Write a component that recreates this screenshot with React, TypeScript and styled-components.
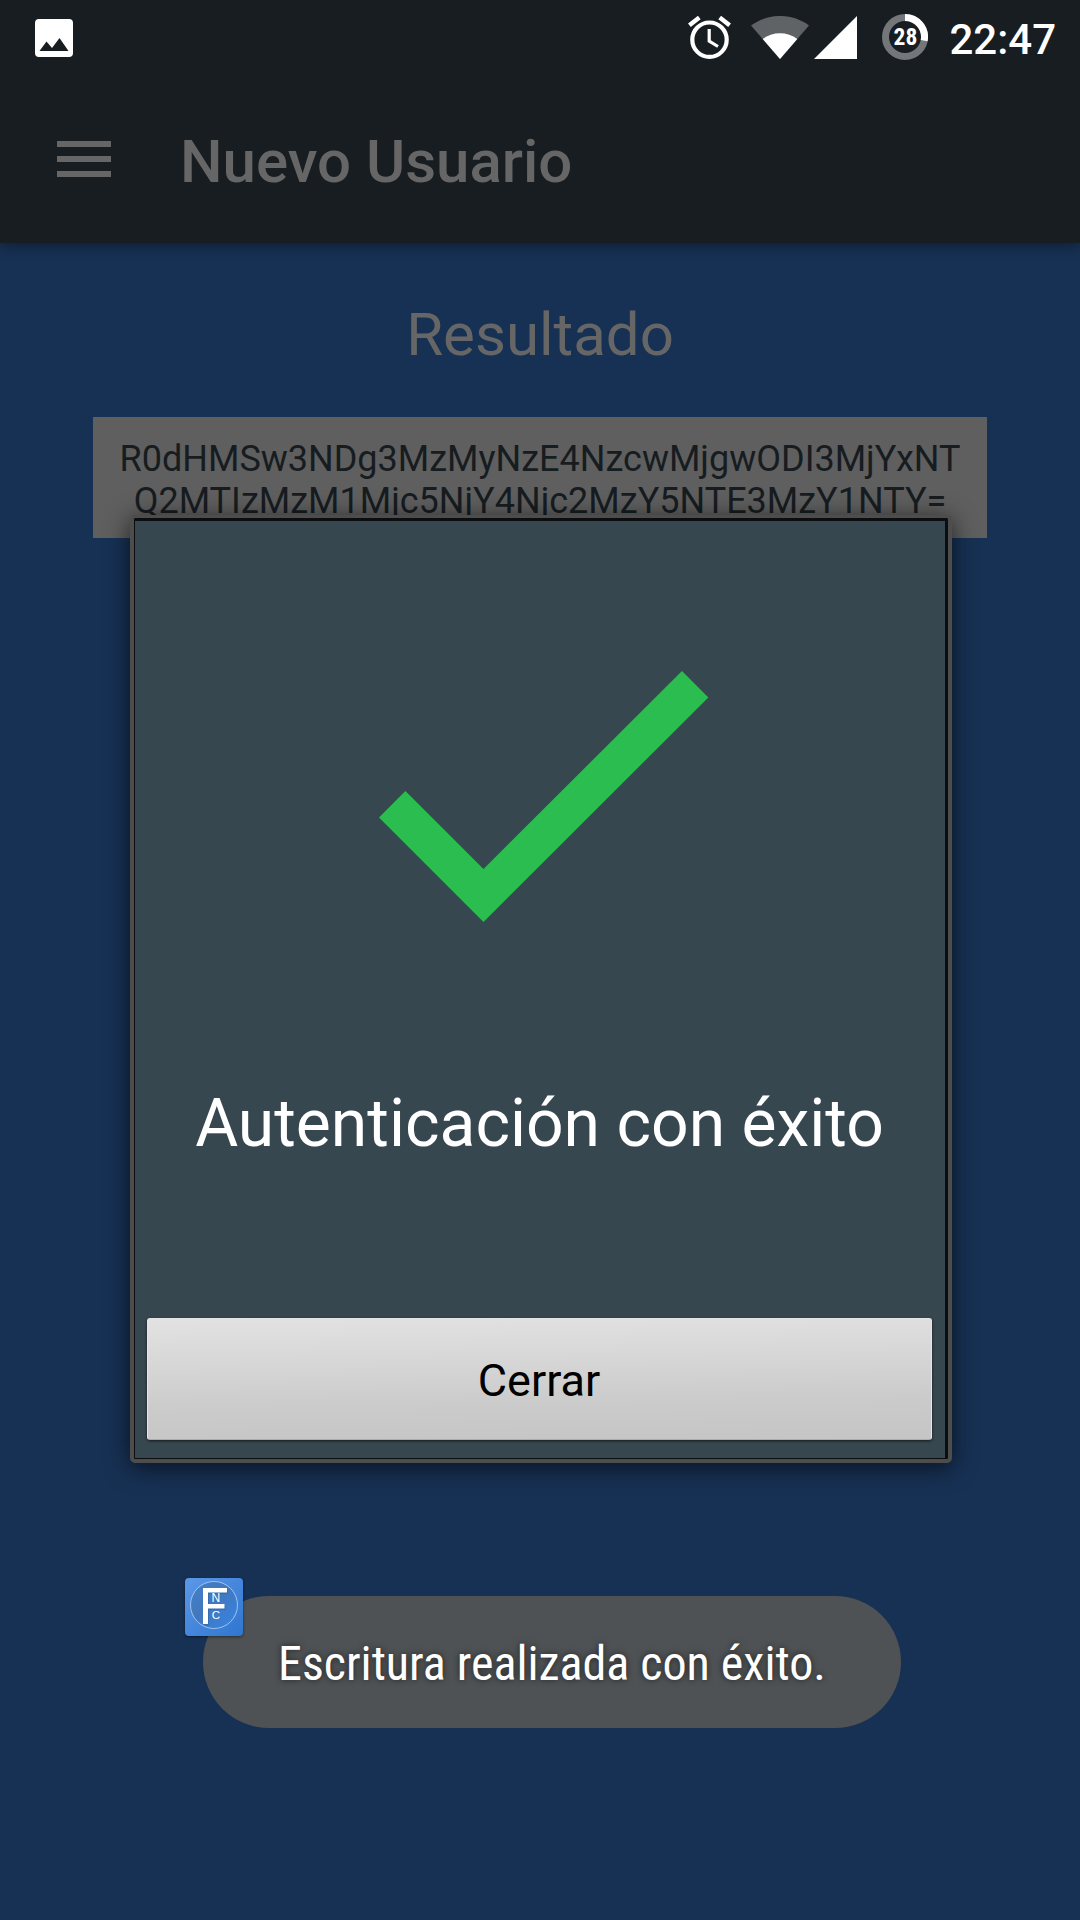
import React from "react";
import styled, { createGlobalStyle } from "styled-components";

const GlobalStyle = createGlobalStyle`
  *, *::before, *::after { box-sizing: border-box; }
  html, body { margin: 0; padding: 0; background: #173154; }
  body { font-family: Roboto, "Liberation Sans", sans-serif; }
`;

const Screen = styled.div`
  position: relative;
  display: flex;
  flex-direction: column;
  width: 1080px;
  height: 1920px;
  overflow: hidden;
  background: #173154;
`;

const Header = styled.header`
  height: 243px;
  flex: none;
  background: #171d20;
  box-shadow: 0 4px 12px rgba(0, 0, 0, 0.35);
  z-index: 1;
`;

const StatusBar = styled.div`
  display: flex;
  align-items: center;
  height: 75px;
  padding: 0 24px 0 35px;
  color: #fff;
`;

const StatusIcon = styled.svg<{ $gap?: number }>`
  flex: none;
  display: block;
  margin-right: ${(p) => p.$gap ?? 0}px;
`;

const Spacer = styled.div`
  flex: 1;
`;

const Battery = styled.div`
  position: relative;
  width: 46px;
  height: 46px;
  flex: none;
  margin-right: 21px;
  margin-top: -1px;
`;

const BatteryLevel = styled.span`
  position: absolute;
  inset: 0;
  display: flex;
  align-items: center;
  justify-content: center;
  font-family: "Roboto Condensed", Roboto, sans-serif;
  font-stretch: 75%;
  font-size: 23.5px;
  font-weight: 700;
  line-height: 46px;
`;

const Clock = styled.span`
  font-size: 42px;
  font-weight: 500;
  line-height: 50px;
  padding-top: 5px;
  white-space: nowrap;
`;

const AppBar = styled.div`
  display: flex;
  align-items: center;
  height: 168px;
  padding-left: 57px;
`;

const MenuButton = styled.button`
  display: flex;
  flex-direction: column;
  gap: 9px;
  width: 54px;
  margin: 0 69px 0 0;
  padding: 0;
  border: 0;
  background: none;
`;

const MenuLine = styled.span`
  height: 6px;
  background: #666;
`;

const Title = styled.h1`
  margin: 0;
  padding-top: 5px;
  font-size: 60px;
  font-weight: 500;
  line-height: 60px;
  color: #666;
  white-space: nowrap;
`;

const Content = styled.main`
  display: flex;
  flex-direction: column;
  align-items: center;
  padding-top: 57px;
`;

const Heading = styled.h2`
  margin: 0 0 47px;
  font-size: 60px;
  font-weight: 400;
  line-height: 70px;
  color: #666;
`;

const ResultBox = styled.div`
  width: 894px;
  height: 121px;
  padding-top: 21px;
  background: #5f5f5f;
  color: #161c20;
  font-size: 36px;
  line-height: 42px;
  text-align: center;
  white-space: nowrap;
`;

const Dialog = styled.section`
  position: absolute;
  left: 130px;
  top: 515px;
  width: 822px;
  height: 948px;
  border: 4px solid #4d4d4d;
  border-top-width: 3px;
  border-radius: 5px;
  background: #0b0d0f;
  padding: 3px 3px 1px 1px;
  box-shadow: 0 4px 24px rgba(0, 0, 0, 0.65);
  z-index: 2;
`;

const DialogBody = styled.div`
  display: flex;
  flex-direction: column;
  align-items: center;
  height: 100%;
  padding: 150px 13px 18px 12px;
  background: #37474f;
`;

const CheckMark = styled.svg`
  display: block;
  flex: none;
  margin-left: 8px;
`;

const Message = styled.p`
  margin: 162px 0 0;
  font-size: 66px;
  line-height: 80px;
  color: #fff;
  white-space: nowrap;
`;

const CloseButton = styled.button`
  width: 100%;
  height: 122px;
  margin-top: auto;
  padding: 3px 1px 0 0;
  border: 1px solid #e6e6e6;
  border-bottom-color: #a9adae;
  border-radius: 3px;
  background: linear-gradient(179deg, #e2e2e2 0%, #d9d9d9 28%, #cbcbcb 68%, #c5c5c5 100%);
  box-shadow: 0 1px 3px rgba(0, 0, 0, 0.65);
  font: 400 45px/54px Roboto, "Liberation Sans", sans-serif;
  color: #000;
`;

const Toast = styled.div`
  position: absolute;
  left: 203px;
  top: 1596px;
  display: flex;
  align-items: center;
  justify-content: center;
  width: 698px;
  height: 132px;
  border-radius: 66px;
  background: #4f5254;
  z-index: 3;
`;

const ToastText = styled.span`
  font-family: "Roboto Condensed", Roboto, sans-serif;
  font-stretch: 75%;
  font-size: 48px;
  line-height: 56px;
  color: #fff;
  white-space: nowrap;
  text-shadow: 0 0 6px rgba(0, 0, 0, 0.6);
  padding-top: 3px;
`;

const ToastIcon = styled.div`
  position: absolute;
  left: -18px;
  top: -18px;
  width: 58px;
  height: 58px;
  border-radius: 4px;
  background: linear-gradient(135deg, #5b98e8, #2f75cf);
  box-shadow: 0 1px 3px rgba(0, 0, 0, 0.5);
`;

export default function App() {
  return (
    <>
      <GlobalStyle />
      <Screen>
        <Header>
          <StatusBar>
            <StatusIcon width="38" height="38" viewBox="0 0 38 38">
              <path
                fillRule="evenodd"
                fill="#fff"
                d="M4 0H34A4 4 0 0 1 38 4V34A4 4 0 0 1 34 38H4A4 4 0 0 1 0 34V4A4 4 0 0 1 4 0ZM4.500 32H33.500L24.500 19L17 29L11.500 22.500Z"
              />
            </StatusIcon>
            <Spacer />
            <StatusIcon $gap={20} width="43" height="43" viewBox="0 0 43 43" fill="none" stroke="#fff">
              <circle cx="21.500" cy="23.700" r="17.200" strokeWidth="4.200" />
              <path d="M1.400 9.300L11.300 1.500M41.600 9.300L31.700 1.500" strokeWidth="4.400" />
              <path d="M21.200 13V25.200L30 30.500" strokeWidth="3.200" />
            </StatusIcon>
            <StatusIcon $gap={5} width="58" height="43" viewBox="0 0 58 43">
              <path d="M29 43L0 9.500C17 -3.200 41 -3.200 58 9.500Z" fill="#5f6365" />
              <path d="M29 43L11.700 23C21.500 15.200 36.500 15.200 46.300 23Z" fill="#fff" />
            </StatusIcon>
            <StatusIcon $gap={25} width="43" height="43" viewBox="0 0 43 43">
              <path d="M0 43H43V0Z" fill="#fff" />
            </StatusIcon>
            <Battery>
              <svg width="46" height="46" viewBox="0 0 46 46" fill="none" strokeWidth="7">
                <circle cx="23" cy="23" r="19.500" stroke="#74777a" />
                <path d="M23 3.500A19.500 19.500 0 0 1 42.150 26.700" stroke="#fff" />
              </svg>
              <BatteryLevel>28</BatteryLevel>
            </Battery>
            <Clock>22:47</Clock>
          </StatusBar>
          <AppBar>
            <MenuButton aria-label="Menú">
              <MenuLine />
              <MenuLine />
              <MenuLine />
            </MenuButton>
            <Title>Nuevo Usuario</Title>
          </AppBar>
        </Header>

        <Content>
          <Heading>Resultado</Heading>
          <ResultBox>
            R0dHMSw3NDg3MzMyNzE4NzcwMjgwODI3MjYxNT
            <br />
            Q2MTIzMzM1Mjc5NjY4Njc2MzY5NTE3MzY1NTY=
          </ResultBox>
        </Content>

        <Dialog>
          <DialogBody>
            <CheckMark width="330" height="251" viewBox="0 0 330 251">
              <path d="M303 0L329.400 26.400L104.500 251L0 146.400L26.400 120L104.500 198Z" fill="#2bbd4f" />
            </CheckMark>
            <Message>Autenticación con éxito</Message>
            <CloseButton>Cerrar</CloseButton>
          </DialogBody>
        </Dialog>

        <Toast>
          <ToastText>Escritura realizada con éxito.</ToastText>
          <ToastIcon>
            <svg width="58" height="58" viewBox="0 0 58 58">
              <defs>
                <linearGradient id="disc" x1="0" y1="0" x2="1" y2="1">
                  <stop offset="0" stopColor="#4680c8" />
                  <stop offset="0.45" stopColor="#4178bd" />
                  <stop offset="0.8" stopColor="#3a80d8" />
                </linearGradient>
              </defs>
              <circle cx="29" cy="27" r="23.500" fill="url(#disc)" stroke="#a9c8f2" strokeWidth="0.900" />
              <path d="M18 10H42V14.500H23V26H39.500V30.500H23V46H18Z" fill="#2c5f9f" fillOpacity="0.5" transform="translate(1 1.500)" />
              <path d="M18 10H42V14.500H23V26H39.500V30.500H23V46H18Z" fill="#fff" />
              <text x="30.800" y="24.300" fontSize="12" fill="#fff" textAnchor="middle" fontFamily="Liberation Sans, sans-serif">
                N
              </text>
              <text x="31" y="40.700" fontSize="11.500" fill="#fff" textAnchor="middle" fontFamily="Liberation Sans, sans-serif">
                C
              </text>
            </svg>
          </ToastIcon>
        </Toast>
      </Screen>
    </>
  );
}
